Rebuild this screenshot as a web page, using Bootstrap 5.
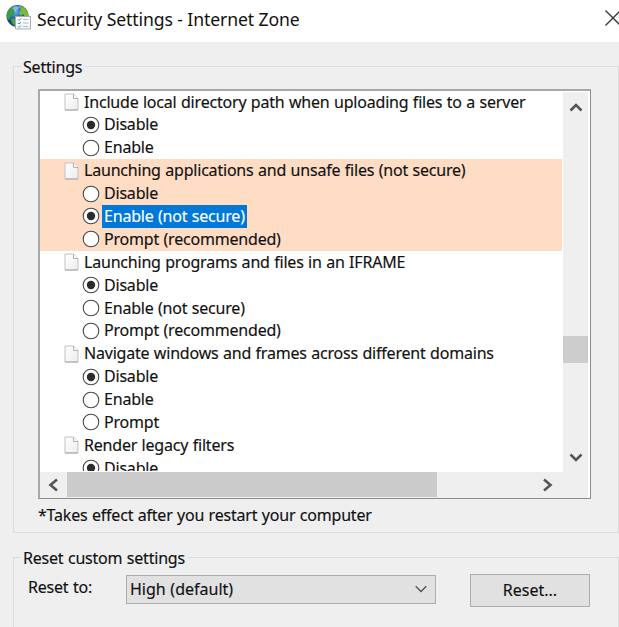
<!DOCTYPE html>
<html lang="en">
<head>
<meta charset="utf-8">
<meta name="viewport" content="width=device-width, initial-scale=1">
<title>Security Settings - Internet Zone</title>
<link href="https://cdn.jsdelivr.net/npm/bootstrap@5.3.0/dist/css/bootstrap.min.css" rel="stylesheet">
<style>
body{font-family:"Noto Sans","Open Sans",sans-serif;font-size:16px;line-height:22.9px;color:#111;background:#efefef;width:619px;height:627px;letter-spacing:-.2px;word-spacing:.5px;-webkit-text-stroke:.15px}
.titlebar{height:41.5px;padding-left:6px}
.titlebar h1{font-size:17.6px;line-height:38px;letter-spacing:-.1px;word-spacing:0;margin-left:5px;-webkit-text-stroke:0}
.close-btn{margin-top:9px;margin-right:-3px}
.group{margin-left:13px;width:606px;border:1px solid #dcdcdc}
.group-settings{margin-top:14px;height:477px}
.group-reset{margin-top:14px;height:90px;border-bottom:0}
.group legend{float:none;width:auto;font-size:16px;line-height:22px;height:22px;margin:-11px 0 0 7px;padding:0 3px 0 2px;background:#efefef}
.listbox{margin:11px 0 0 24px;width:553px;height:410px;border:1px solid #878d94;border-top:2px solid #a4a9b0;border-left:2px solid #a4a9b0;background:#fff;padding:0 2px 1px 0}
.rows{height:380px;width:523px;flex:none}
.item{height:22.9px;padding-left:24px}
.opt{padding-left:42px}
.item svg{flex:none}
.item span{padding-left:5px;white-space:nowrap}
.opt span{padding:0 2px 0 2px;margin-left:2px}
.hot{background:#ffdcc4;width:522px}
.picked{background:#0078d7;color:#fff}
.vbar{width:25px;flex:none;background:#efefef;height:380px;margin-top:1px}
.vthumb{height:27px;background:#cdcdcd;margin-top:213px}
.vup{height:31px}.vdown{margin-top:auto;height:28px}
.hbar{height:26px;background:#efefef}
.hthumb{width:370px;height:25px;background:#cbcbcb}
.hnext{margin-right:22px}
.note{margin:5px 0 0 24px}
.combo{width:310px;height:29px;background:#e1e1e1;border:1px solid #adadad;padding:0 8px 0 3px;margin-top:6px;letter-spacing:0}
.reset-label{width:98px;margin:7px 0 0 14px}
.reset-btn{width:120px;height:33px;background:#e1e1e1;border:1px solid #adadad;border-radius:0;font-size:16px;padding:0;color:#111;margin-left:34px;margin-top:5px}
</style>
</head>
<body class="overflow-hidden">
<svg class="position-absolute" width="0" height="0">
<defs>
<linearGradient id="paper" x2="1" y2="1"><stop stop-color="#fff"/><stop offset="1" stop-color="#ececec"/></linearGradient>
<radialGradient id="sea" cx=".4" cy=".3"><stop stop-color="#66b8ee"/><stop offset=".6" stop-color="#2866b4"/><stop offset="1" stop-color="#173d83"/></radialGradient>
</defs>
<symbol id="page" viewBox="0 0 15 18"><path d="M1 1h8.5L14 5.5V17H1z" fill="url(#paper)" stroke="#c2c2c2"/><path d="M9.5 1v4.5H14" fill="#f8f8f8" stroke="#b2b2b2"/><path d="M1 17h13" stroke="#aaa"/></symbol>
<symbol id="off" viewBox="0 0 18 18"><circle cx="9" cy="9" r="7.8" fill="#fff" stroke="#484848" stroke-width="1.1"/></symbol>
<symbol id="on" viewBox="0 0 18 18"><circle cx="9" cy="9" r="7.8" fill="#fff" stroke="#484848" stroke-width="1.1"/><circle cx="9" cy="9" r="4.2" fill="#2c2c2c"/></symbol>
</svg>

<header class="titlebar bg-white d-flex align-items-start">
<svg width="26" height="28" viewBox="0 0 26 28" class="mt-1">
<circle cx="11.500" cy="12" r="11" fill="url(#sea)"/>
<path d="M1 9Q3 4 8 2.500L10 4L8 6.500L9 9L5 12L3.500 16L1.500 15Q0 12 1 9Z" fill="#3d9a45"/>
<path d="M13 2Q19 2 22 9V13H19L17 10L15 12L13 9L15 6Z" fill="#78bd32"/>
<path d="M6 14L10 15.500L9.500 20L8 21.500Q5 19 5 16Z" fill="#48a536"/>
<path d="M6 4Q9 1 14 3Q11 6 9 7Z" fill="#dff4ff" opacity=".45"/>
<path d="M9.500 12.500H24.500V25H9.500z" fill="#f7f9fa" stroke="#a5abae"/>
<path d="M12 15.500l1 1 2-2M12 19l1 1 2-2M12 22.500l1 1 2-2" fill="none" stroke="#318cd3"/>
<path d="M17 15.500h5.500M17 19h5.500M17 22.500h5.500" stroke="#b6bdc0"/>
</svg>
<h1 class="fw-normal mb-0">Security Settings - Internet Zone</h1>
<svg class="close-btn ms-auto" width="18" height="18" viewBox="0 0 18 18"><path d="M1.500 1.500l15 15M16.500 1.500l-15 15" stroke="#333" stroke-width="1.3"/></svg>
</header>

<main>
<fieldset class="group group-settings">
<legend>Settings</legend>
<div class="listbox">
<div class="d-flex">
<div class="rows overflow-hidden">
<div class="item d-flex align-items-center"><svg width="15" height="18"><use href="#page"/></svg><span>Include local directory path when uploading files to a server</span></div>
<div class="item opt d-flex align-items-center"><svg width="18" height="18"><use href="#on"/></svg><span>Disable</span></div>
<div class="item opt d-flex align-items-center"><svg width="18" height="18"><use href="#off"/></svg><span>Enable</span></div>
<div class="hot">
<div class="item d-flex align-items-center"><svg width="15" height="18"><use href="#page"/></svg><span>Launching applications and unsafe files (not secure)</span></div>
<div class="item opt d-flex align-items-center"><svg width="18" height="18"><use href="#off"/></svg><span>Disable</span></div>
<div class="item opt d-flex align-items-center"><svg width="18" height="18"><use href="#on"/></svg><span class="picked">Enable (not secure)</span></div>
<div class="item opt d-flex align-items-center"><svg width="18" height="18"><use href="#off"/></svg><span>Prompt (recommended)</span></div>
</div>
<div class="item d-flex align-items-center"><svg width="15" height="18"><use href="#page"/></svg><span>Launching programs and files in an IFRAME</span></div>
<div class="item opt d-flex align-items-center"><svg width="18" height="18"><use href="#on"/></svg><span>Disable</span></div>
<div class="item opt d-flex align-items-center"><svg width="18" height="18"><use href="#off"/></svg><span>Enable (not secure)</span></div>
<div class="item opt d-flex align-items-center"><svg width="18" height="18"><use href="#off"/></svg><span>Prompt (recommended)</span></div>
<div class="item d-flex align-items-center"><svg width="15" height="18"><use href="#page"/></svg><span>Navigate windows and frames across different domains</span></div>
<div class="item opt d-flex align-items-center"><svg width="18" height="18"><use href="#on"/></svg><span>Disable</span></div>
<div class="item opt d-flex align-items-center"><svg width="18" height="18"><use href="#off"/></svg><span>Enable</span></div>
<div class="item opt d-flex align-items-center"><svg width="18" height="18"><use href="#off"/></svg><span>Prompt</span></div>
<div class="item d-flex align-items-center"><svg width="15" height="18"><use href="#page"/></svg><span>Render legacy filters</span></div>
<div class="item opt d-flex align-items-center"><svg width="18" height="18"><use href="#on"/></svg><span>Disable</span></div>
</div>
<div class="vbar d-flex flex-column">
<div class="vup d-flex align-items-center justify-content-center"><svg width="14" height="11" viewBox="0 0 14 11"><path d="M1.500 8.500L7 3l5.500 5.500" fill="none" stroke="#555" stroke-width="2.6"/></svg></div>
<div class="vthumb"></div>
<div class="vdown d-flex align-items-center justify-content-center"><svg width="14" height="11" viewBox="0 0 14 11"><path d="M1.500 2.500L7 8l5.500-5.500" fill="none" stroke="#555" stroke-width="2.6"/></svg></div>
</div>
</div>
<div class="hbar d-flex align-items-center">
<svg width="27" height="26" viewBox="0 0 27 26"><path d="M17 7.500L10.500 13l6.500 5.500" fill="none" stroke="#555" stroke-width="2.6"/></svg>
<div class="hthumb"></div>
<svg class="hnext ms-auto" width="32" height="26" viewBox="0 0 32 26"><path d="M10 7.500l6.500 5.500-6.500 5.500" fill="none" stroke="#555" stroke-width="2.6"/></svg>
</div>
</div>
<p class="note mb-0">*Takes effect after you restart your computer</p>
</fieldset>

<fieldset class="group group-reset">
<legend>Reset custom settings</legend>
<div class="d-flex align-items-start">
<label class="reset-label">Reset to:</label>
<div class="combo d-flex align-items-center justify-content-between"><span>High (default)</span><svg width="12" height="8" viewBox="0 0 12 8"><path d="M.7 1.200L6 6.500l5.300-5.300" fill="none" stroke="#555" stroke-width="1.4"/></svg></div>
<button type="button" class="btn reset-btn">Reset...</button>
</div>
</fieldset>
</main>
<script src="https://cdn.jsdelivr.net/npm/bootstrap@5.3.0/dist/js/bootstrap.bundle.min.js"></script>
</body>
</html>
